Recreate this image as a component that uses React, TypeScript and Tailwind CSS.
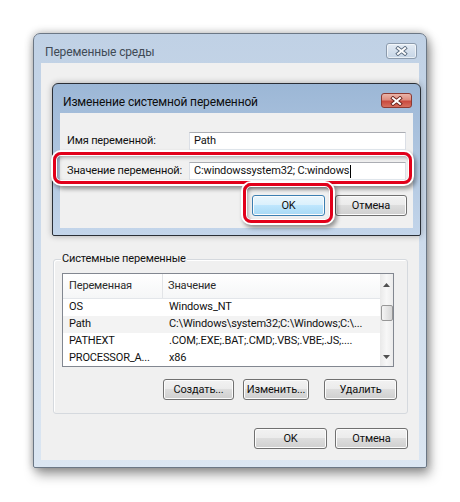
import type { ReactNode } from "react";

const rows = [
  { name: "OS", value: "Windows_NT" },
  { name: "Path", value: "C:\\Windows\\system32;C:\\Windows;C:\\...", selected: true },
  { name: "PATHEXT", value: ".COM;.EXE;.BAT;.CMD;.VBS;.VBE;.JS;...." },
  { name: "PROCESSOR_A...", value: "x86" },
];

function CloseX({ dark }: { dark: string }) {
  return (
    <svg width="13" height="10" viewBox="0 0 13 10">
      <path d="M3 2.2 L10 7.8 M10 2.2 L3 7.8" stroke={dark} strokeWidth="3.8" strokeLinecap="square" />
      <path d="M3 2.2 L10 7.8 M10 2.2 L3 7.8" stroke="#ffffff" strokeWidth="2" strokeLinecap="square" />
    </svg>
  );
}

function WinButton({ children, className, primary }: { children: ReactNode; className: string; primary?: boolean }) {
  return (
    <button
      className={
        "h-[21px] rounded-[3px] border flex items-center justify-center whitespace-nowrap leading-none text-[#111] shadow-[inset_0_0_0_1px_#fcfcfc] " +
        (primary
          ? "border-[#3c7fb1] bg-[linear-gradient(#eaf6fd_0%,#d9f0fc_50%,#bee6fd_50%,#a7d9f5_100%)] "
          : "border-[#707070] bg-[linear-gradient(#f2f2f2_0%,#ebebeb_50%,#dddddd_50%,#cfcfcf_100%)] ") +
        className
      }
    >
      {children}
    </button>
  );
}

function Arrow({ up }: { up?: boolean }) {
  return (
    <svg width="7" height="4" viewBox="0 0 7 4">
      <path d={up ? "M0 4 L3.5 0 L7 4 Z" : "M0 0 L3.5 4 L7 0 Z"} fill="#505050" />
    </svg>
  );
}

export default function App() {
  return (
    <div className="relative w-[460px] h-[502px] bg-white overflow-hidden pt-[33px] pl-[33px] font-['Roboto',sans-serif] text-[11px] tracking-[-0.15px] text-[#111]">
      {/* Outer window */}
      <div className="w-[394px] h-[435px] flex flex-col rounded-t-[7px] rounded-b-[2px] border border-[#6b7785] bg-gradient-to-b from-[#c0d1e5] to-[#dbe6f2] shadow-[0_0_9px_rgba(0,0,0,0.3),3px_7px_12px_rgba(0,0,0,0.35)]">
        <div className="h-[29px] flex items-start justify-between pl-[11px] pr-[9px]">
          <div className="pt-[10px] leading-[16px] text-[12px] text-[#404a55] whitespace-nowrap">Переменные среды</div>
          <div className="mt-[9px] w-[31px] h-[16px] rounded-[3px] border border-[#8c9bad] bg-gradient-to-b from-[#e3ebf4] to-[#c6d5e6] shadow-[inset_0_0_0_1px_rgba(255,255,255,0.6)] flex items-center justify-center">
            <CloseX dark="#5d6d80" />
          </div>
        </div>

        <div className="relative mx-[7px] mb-[7px] flex-1 bg-[#f0f0f0] flex flex-col">
          {/* System variables group */}
          <div className="ml-[12px] mt-[196px] w-[355px] h-[155px] border border-[#d5d9de] rounded-[3px] flex flex-col shadow-[inset_1px_1px_0_#ffffff]">
            <div className="-mt-[9px] ml-[7px] px-[1px] self-start bg-[#f0f0f0] leading-[16px] whitespace-nowrap">Системные переменные</div>

            <div className="ml-[8px] mt-[6px] w-[332px] h-[94px] border border-[#828790] bg-white flex overflow-hidden">
              <div className="w-[317px] flex flex-col">
                <div className="h-[25px] shrink-0 flex bg-gradient-to-b from-white to-[#f5f6f7] border-b border-[#e3e6ea] text-[#2b2b2b]">
                  <div className="w-[100px] pl-[6px] flex items-center border-r border-[#e2e4e7]">Переменная</div>
                  <div className="pl-[5px] flex items-center">Значение</div>
                </div>
                {rows.map((r) => (
                  <div key={r.name} className={"h-[17px] shrink-0 flex items-center whitespace-nowrap " + (r.selected ? "bg-[#f3f3f3]" : "")}>
                    <div className="w-[100px] pl-[6px] overflow-hidden">{r.name}</div>
                    <div className="pl-[6px] w-[217px] overflow-hidden">{r.value}</div>
                  </div>
                ))}
              </div>
              {/* scrollbar */}
              <div className="w-[13px] flex flex-col items-center bg-gradient-to-r from-[#e9e9e9] via-[#f7f7f7] to-[#ececec]">
                <div className="h-[21px] flex items-center justify-center"><Arrow up /></div>
                <div className="mt-[10px] w-[12px] h-[16px] rounded-[2px] border border-[#979797] bg-gradient-to-r from-[#f4f4f4] to-[#d6d6d6]" />
                <div className="flex-1" />
                <div className="h-[19px] flex items-center justify-center"><Arrow /></div>
              </div>
            </div>

            <div className="mt-[12px] pr-[10px] flex justify-end">
              <WinButton className="w-[71px]">Создать...</WinButton>
              <WinButton className="ml-[9px] w-[66px]">Изменить...</WinButton>
              <WinButton className="ml-[15px] w-[73px]">Удалить</WinButton>
            </div>
          </div>

          <div className="mt-[14px] pr-[11px] flex justify-end gap-[8px]">
            <WinButton className="w-[73px]">OK</WinButton>
            <WinButton className="w-[73px]">Отмена</WinButton>
          </div>

          {/* Edit system variable dialog, over the window */}
          <div className="absolute left-[11px] top-[20px] w-[369px] h-[153px] flex flex-col rounded-t-[6px] rounded-b-[2px] border border-[#2a2f36] bg-gradient-to-b from-[#9cb7d6] to-[#c3d5ea] shadow-[0_0_6px_rgba(0,0,0,0.3)]">
            <div className="h-[29px] flex items-start justify-between pl-[10px] pr-[8px]">
              <div className="pt-[10px] leading-[16px] text-[12px] text-[#0d0d0d] whitespace-nowrap">Изменение системной переменной</div>
              <div className="mt-[9px] w-[31px] h-[15px] rounded-[3px] border border-[#8d3a32] bg-[linear-gradient(#eab4a8_0%,#de8e80_45%,#c9493d_55%,#d6705f_100%)] flex items-center justify-center">
                <CloseX dark="#6b231c" />
              </div>
            </div>
            <div className="mx-[7px] mb-[7px] flex-1 bg-[#f0f0f0] flex flex-col">
              <div className="mt-[19px] flex items-center whitespace-nowrap">
                <div className="w-[129px] pl-[7px]">Имя переменной:</div>
                <div className="w-[217px] h-[18px] border border-[#abadb3] border-b-[#e3e9ef] border-x-[#dbdfe6] bg-white pl-[4px] flex items-center">Path</div>
              </div>
              <div className="mt-[12px] flex items-center whitespace-nowrap">
                <div className="w-[129px] pl-[7px]">Значение переменной:</div>
                <div className="w-[217px] h-[18px] border border-[#abadb3] border-b-[#e3e9ef] border-x-[#dbdfe6] bg-white pl-[4px] flex items-center">
                  C:windowssystem32; C:windows
                  <span className="ml-[1px] w-px h-[13px] bg-black" />
                </div>
              </div>
              <div className="mt-[15px] pr-[6px] flex justify-end gap-[10px]">
                <WinButton primary className="w-[73px]">OK</WinButton>
                <WinButton className="w-[72px]">Отмена</WinButton>
              </div>
            </div>
          </div>
        </div>
      </div>

      {/* Red annotation frames */}
      <div className="absolute left-[53px] top-[152px] w-[359px] h-[32px] rounded-[8px] border-[3px] border-[#e2001a] shadow-[0_0_0_2px_#ffffff,inset_0_0_0_1px_#ffffff,inset_2px_2px_4px_rgba(0,0,0,0.35),2px_3px_4px_2px_rgba(0,0,0,0.4)]" />
      <div className="absolute left-[243px] top-[183px] w-[90px] h-[40px] rounded-[8px] border-[3px] border-[#e2001a] shadow-[0_0_0_2px_#ffffff,inset_0_0_0_1px_#ffffff,inset_2px_2px_4px_rgba(0,0,0,0.35),2px_3px_4px_2px_rgba(0,0,0,0.4)]" />
    </div>
  );
}
